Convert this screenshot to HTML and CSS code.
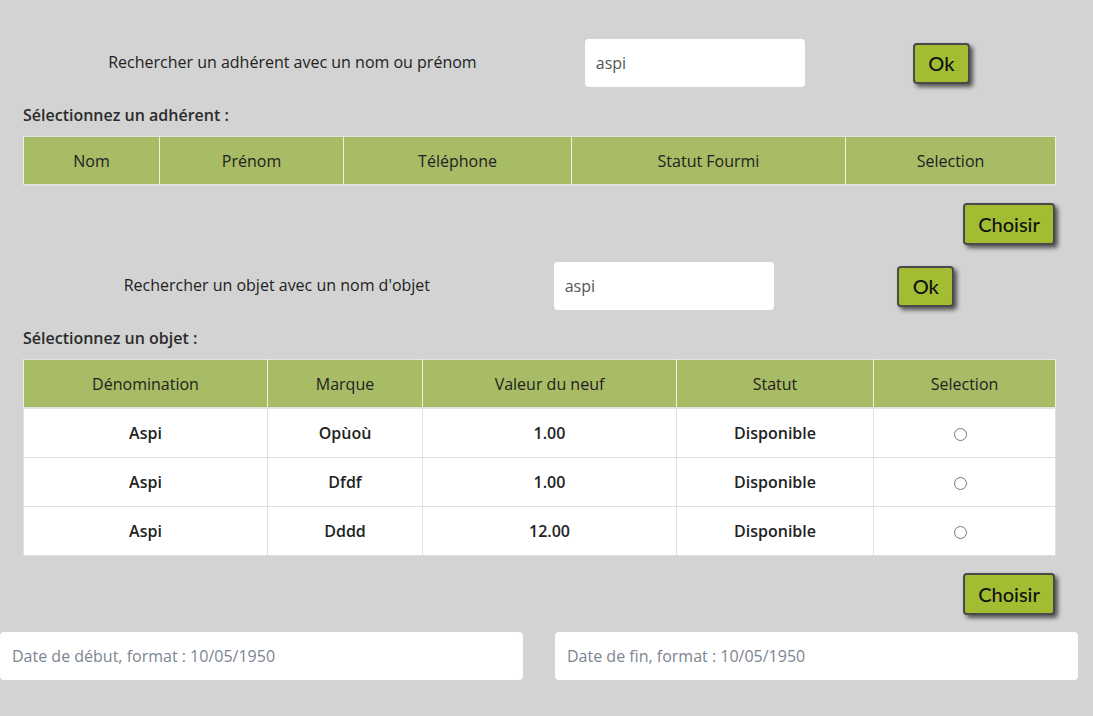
FILE: index.html
```html
<!DOCTYPE html>
<html lang="fr">
<head>
<meta charset="utf-8">
<title>Emprunt</title>
<link rel="stylesheet" href="styles.css">
</head>
<body>
<div class="page">
  <div class="search-row first">
    <span class="search-label">Rechercher un adhérent avec un nom ou prénom</span>
    <input class="text-input search-input" type="text" value="aspi">
    <button class="btn btn-ok">Ok</button>
  </div>

  <p class="section-label">Sélectionnez un adhérent :</p>
  <table class="data-table">
    <colgroup>
      <col class="c-nom"><col class="c-prenom"><col class="c-tel"><col class="c-statut"><col class="c-sel1">
    </colgroup>
    <thead>
      <tr><th>Nom</th><th>Prénom</th><th>Téléphone</th><th>Statut Fourmi</th><th>Selection</th></tr>
    </thead>
  </table>
  <div class="actions"><button class="btn btn-choose">Choisir</button></div>

  <div class="search-row">
    <span class="search-label">Rechercher un objet avec un nom d'objet</span>
    <input class="text-input search-input" type="text" value="aspi">
    <button class="btn btn-ok">Ok</button>
  </div>

  <p class="section-label">Sélectionnez un objet :</p>
  <table class="data-table">
    <colgroup>
      <col class="c-denom"><col class="c-marque"><col class="c-valeur"><col class="c-statut2"><col class="c-sel2">
    </colgroup>
    <thead>
      <tr><th>Dénomination</th><th>Marque</th><th>Valeur du neuf</th><th>Statut</th><th>Selection</th></tr>
    </thead>
    <tbody>
      <tr><td>Aspi</td><td>Opùoù</td><td>1.00</td><td>Disponible</td><td><input class="radio" type="radio" name="objet"></td></tr>
      <tr><td>Aspi</td><td>Dfdf</td><td>1.00</td><td>Disponible</td><td><input class="radio" type="radio" name="objet"></td></tr>
      <tr><td>Aspi</td><td>Dddd</td><td>12.00</td><td>Disponible</td><td><input class="radio" type="radio" name="objet"></td></tr>
    </tbody>
  </table>
  <div class="actions"><button class="btn btn-choose">Choisir</button></div>

  <div class="dates">
    <input class="text-input date-input" type="text" placeholder="Date de début, format : 10/05/1950">
    <input class="text-input date-input" type="text" placeholder="Date de fin, format : 10/05/1950">
  </div>
</div>
</body>
</html>
```

FILE: styles.css
```css
html, body {
  margin: 0;
  padding: 0;
  background: #d3d3d3;
}
body {
  font-family: "Open Sans", Lato, sans-serif;
  font-size: 16px;
  color: #2b2b2b;
}
.page {
  width: 1078px;
  padding-top: 39px;
  padding-bottom: 36px;
}
.search-row {
  display: flex;
  justify-content: space-evenly;
  align-items: center;
  height: 48px;
}
.search-label {
  font-size: 16px;
  font-weight: 500;
  color: #222;
  position: relative;
  top: -1px;
}
.text-input {
  box-sizing: border-box;
  height: 48px;
  border: none;
  border-radius: 4px;
  background: #fff;
  font-family: inherit;
  font-size: 16px;
  color: #555;
  padding: 0 11px;
  outline: none;
}
.text-input::placeholder {
  color: #7c8591;
}
.search-input {
  width: 220px;
}
.btn {
  font-family: Lato, "Open Sans", sans-serif;
  font-weight: 500;
  background: #a3bd33;
  color: #111;
  border: 2px solid #4a4a4a;
  border-radius: 4px;
  box-shadow: 3px 3px 4px rgba(40, 40, 40, 0.75);
  cursor: pointer;
  padding: 0;
}
.btn-ok {
  width: 57px;
  height: 41px;
  font-size: 20px;
}
.section-label {
  margin: 18px 0 11px 23px;
  line-height: 20px;
  font-weight: 600;
  font-size: 16px;
  color: #2b2b2b;
}
.data-table {
  margin: 0 23px;
  width: 1032px;
  table-layout: fixed;
  border-collapse: collapse;
  border: 1px solid #e2e2e2;
}
.data-table th {
  background: #a8bb65;
  font-weight: 500;
  color: #222;
  height: 47px;
  padding: 0;
  border-left: 1px solid #eef0e6;
  border-right: 1px solid #eef0e6;
  border-bottom: 2px solid #e2e2e2;
  text-align: center;
  vertical-align: middle;
}
.data-table td {
  background: #fff;
  font-weight: 600;
  color: #222;
  height: 48px;
  padding: 0;
  border: 1px solid #e0e0e4;
  text-align: center;
  vertical-align: middle;
}
.c-nom { width: 136px; }
.c-prenom { width: 184px; }
.c-tel { width: 228px; }
.c-statut { width: 274px; }
.c-sel1 { width: 210px; }
.c-denom { width: 244px; }
.c-marque { width: 155px; }
.c-valeur { width: 254px; }
.c-statut2 { width: 197px; }
.c-sel2 { width: 182px; }
.radio {
  margin: 0 8px 0 0;
  width: 13px;
  height: 13px;
  vertical-align: middle;
}
.actions {
  display: flex;
  justify-content: flex-end;
  padding-right: 23px;
  margin: 17px 0;
}
.btn-choose {
  width: 92px;
  height: 42px;
  font-size: 20px;
}
.dates {
  display: flex;
  gap: 32px;
}
.date-input {
  flex: 1;
  padding-left: 12px;
}
```
